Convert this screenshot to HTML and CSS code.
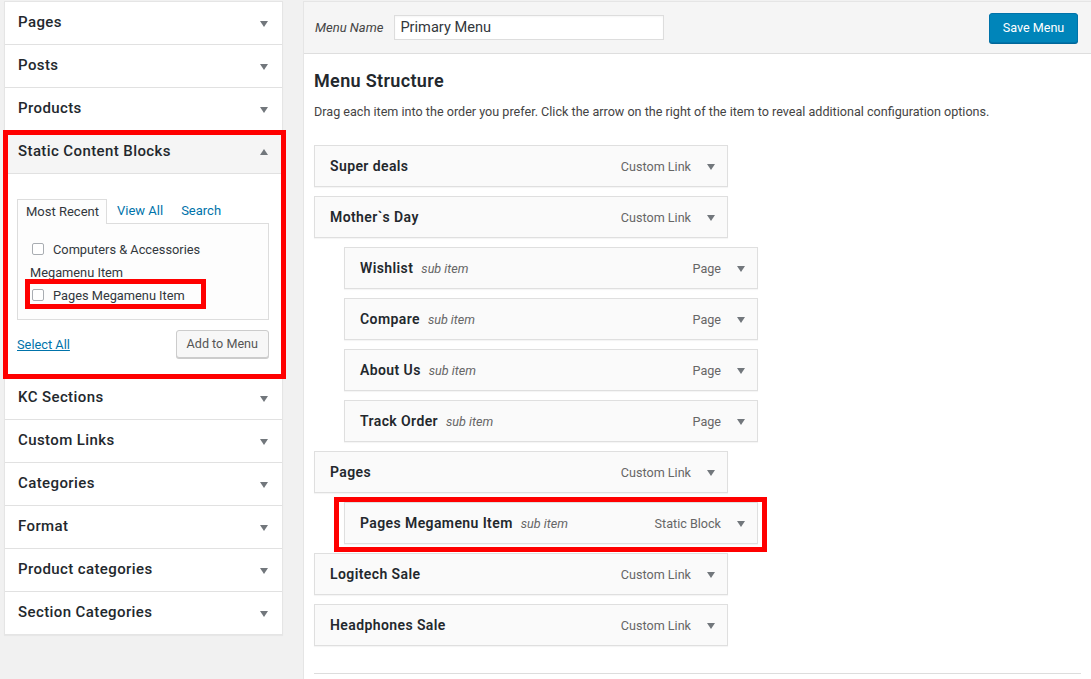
FILE: index.html
```html
<!DOCTYPE html>
<html>
<head>
<meta charset="utf-8">
<link rel="stylesheet" href="styles.css">
</head>
<body>
<div class="page">
  <aside class="side">
    <div class="acc"><span class="acc-title">Pages</span><span class="arrow"></span></div>
    <div class="acc"><span class="acc-title">Posts</span><span class="arrow"></span></div>
    <div class="acc"><span class="acc-title">Products</span><span class="arrow"></span></div>
    <div class="acc-open marked">
      <div class="acc acc-head"><span class="acc-title">Static Content Blocks</span><span class="arrow up"></span></div>
      <div class="acc-body">
        <div class="tabs">
          <span class="tab active">Most Recent</span>
          <span class="tab link">View All</span>
          <span class="tab link">Search</span>
        </div>
        <div class="tab-panel">
          <label class="chk-line"><span class="chk"></span>Computers &amp; Accessories<br>Megamenu Item</label>
          <label class="chk-line small-mark"><span class="chk"></span>Pages Megamenu Item</label>
        </div>
        <div class="acc-actions">
          <a class="select-all">Select All</a>
          <span class="btn">Add to Menu</span>
        </div>
      </div>
    </div>
    <div class="acc"><span class="acc-title">KC Sections</span><span class="arrow"></span></div>
    <div class="acc"><span class="acc-title">Custom Links</span><span class="arrow"></span></div>
    <div class="acc"><span class="acc-title">Categories</span><span class="arrow"></span></div>
    <div class="acc"><span class="acc-title">Format</span><span class="arrow"></span></div>
    <div class="acc"><span class="acc-title">Product categories</span><span class="arrow"></span></div>
    <div class="acc"><span class="acc-title">Section Categories</span><span class="arrow"></span></div>
  </aside>

  <main class="menu">
    <div class="menu-header">
      <span class="name-label">Menu Name</span>
      <span class="name-input">Primary Menu</span>
      <span class="save">Save Menu</span>
    </div>
    <div class="menu-body">
      <h3 class="menu-h">Menu Structure</h3>
      <p class="menu-desc">Drag each item into the order you prefer. Click the arrow on the right of the item to reveal additional configuration options.</p>
      <div class="items">
        <div class="item"><span class="it-title">Super deals</span><span class="it-type">Custom Link</span><span class="arrow"></span></div>
        <div class="item"><span class="it-title">Mother`s Day</span><span class="it-type">Custom Link</span><span class="arrow"></span></div>
        <div class="item sub"><span class="it-title">Wishlist</span><span class="it-sub">sub item</span><span class="it-type">Page</span><span class="arrow"></span></div>
        <div class="item sub"><span class="it-title">Compare</span><span class="it-sub">sub item</span><span class="it-type">Page</span><span class="arrow"></span></div>
        <div class="item sub"><span class="it-title">About Us</span><span class="it-sub">sub item</span><span class="it-type">Page</span><span class="arrow"></span></div>
        <div class="item sub"><span class="it-title">Track Order</span><span class="it-sub">sub item</span><span class="it-type">Page</span><span class="arrow"></span></div>
        <div class="item"><span class="it-title">Pages</span><span class="it-type">Custom Link</span><span class="arrow"></span></div>
        <div class="item sub item-mark"><span class="it-title">Pages Megamenu Item</span><span class="it-sub">sub item</span><span class="it-type">Static Block</span><span class="arrow"></span></div>
        <div class="item"><span class="it-title">Logitech Sale</span><span class="it-type">Custom Link</span><span class="arrow"></span></div>
        <div class="item"><span class="it-title">Headphones Sale</span><span class="it-type">Custom Link</span><span class="arrow"></span></div>
      </div>
      <div class="menu-footer"></div>
    </div>
  </main>
</div>
</body>
</html>
```

FILE: styles.css
```css
*, *::before, *::after { box-sizing: border-box; }
html, body { margin: 0; padding: 0; }
body {
  background: #f1f1f1;
  font-family: Roboto, "Liberation Sans", Arial, sans-serif;
  color: #32373c;
  width: 1091px;
  height: 679px;
  overflow: hidden;
}
.page {
  display: flex;
  align-items: flex-start;
  padding-top: 1px;
  gap: 20px;
}
.side {
  width: 279px;
  margin-left: 4px;
  background: #fff;
  border: 1px solid #e5e5e5;
  box-shadow: 0 1px 1px rgba(0,0,0,.04);
  flex: none;
}
.acc {
  height: 43px;
  border-bottom: 1px solid #e1e1e1;
  display: flex;
  align-items: center;
  padding: 0 14px 0 13px;
  background: #fff;
}
.side > .acc:last-child { border-bottom: none; height: 42px; }
.acc-title {
  flex: 1;
  font-size: 15px;
  font-weight: 500;
  color: #23282d;
  letter-spacing: 0.4px;
  margin-top: -3px;
}
.arrow {
  width: 0;
  height: 0;
  border-left: 4.5px solid transparent;
  border-right: 4.5px solid transparent;
  border-top: 6px solid #72777c;
  margin-top: 2px;
}
.arrow.up {
  border-top: none;
  border-bottom: 6px solid #72777c;
  margin-top: 0;
}
.acc-open { position: relative; }
.acc-head { background: #f5f5f5; }
.marked::after {
  content: "";
  position: absolute;
  left: -2px;
  right: -4px;
  top: -1px;
  bottom: -2px;
  border: 5px solid #ff0000;
  pointer-events: none;
}
.acc-body {
  height: 203px;
  border-bottom: 1px solid #e1e1e1;
  padding: 25px 13px 0 12px;
}
.tabs {
  display: flex;
  align-items: flex-end;
  height: 24px;
  font-size: 13px;
}
.tab {
  height: 24px;
  line-height: 23px;
}
.tab.active {
  border: 1px solid #ddd;
  border-bottom: none;
  background: #fdfdfd;
  color: #32373c;
  position: relative;
  top: 1px;
  height: 25px;
  padding: 0 7px 0 8px;
}
.tab.link { color: #0073aa; padding: 0 0 0 10px; }
.tab.link + .tab.link { padding-left: 18px; }
.tab-panel {
  height: 97px;
  border: 1px solid #ddd;
  background: #fdfdfd;
  padding: 14px 12px 0 12px;
  font-size: 12.8px;
  line-height: 23px;
  color: #32373c;
}
.chk-line { display: block; position: relative; }
.chk {
  display: inline-block;
  width: 12px;
  height: 12px;
  border: 1px solid #a9adb2;
  border-radius: 2px;
  background: #fff;
  margin: 0 9px 0 2px;
  vertical-align: -1px;
}
.small-mark::after {
  content: "";
  position: absolute;
  left: -5px;
  top: -5px;
  width: 181px;
  height: 30px;
  border: 5px solid #ff0000;
}
.acc-actions {
  display: flex;
  justify-content: space-between;
  align-items: center;
  margin-top: 10px;
}
.select-all {
  color: #0073aa;
  text-decoration: underline;
  font-size: 12.8px;
}
.btn {
  display: inline-block;
  height: 28px;
  line-height: 26px;
  padding: 0 10px;
  font-size: 12.6px;
  color: #555;
  background: #f7f7f7;
  border: 1px solid #ccc;
  border-radius: 3px;
  box-shadow: 0 1px 0 #ccc;
}
.menu {
  flex: 1;
  background: #fff;
  border: 1px solid #e5e5e5;
  border-right: none;
  min-height: 700px;
}
.menu-header {
  height: 52px;
  background: #f5f5f5;
  border-bottom: 1px solid #dedede;
  display: flex;
  align-items: center;
  padding: 0 13px 0 11px;
}
.name-label {
  font-style: italic;
  font-size: 13px;
  color: #444;
  margin-right: 11px;
}
.name-input {
  width: 270px;
  height: 25px;
  border: 1px solid #ddd;
  background: #fff;
  font-size: 14.6px;
  line-height: 23px;
  padding: 0 5px;
  color: #32373c;
  box-shadow: inset 0 1px 2px rgba(0,0,0,.04);
}
.save {
  margin-left: auto;
  height: 30px;
  width: 89px;
  background: #0085ba;
  border: 1px solid #0073aa;
  border-radius: 3px;
  color: #fff;
  font-size: 12.6px;
  line-height: 28px;
  text-align: center;
  box-shadow: 0 1px 0 #006799;
}
.menu-body { padding: 15px 10px 0 10px; }
.menu-h {
  margin: 0;
  font-size: 18px;
  line-height: 24px;
  font-weight: 600;
  color: #23282d;
  letter-spacing: 0.35px;
}
.menu-desc {
  margin: 9px 0 0 0;
  font-size: 12.6px;
  line-height: 20px;
  color: #444;
}
.items { margin-top: 23px; }
.item {
  width: 414px;
  height: 42px;
  margin-bottom: 9px;
  border: 1px solid #dfdfdf;
  background: #fafafa;
  display: flex;
  align-items: center;
  padding: 0 12px 0 15px;
  position: relative;
  box-shadow: 0 1px 1px rgba(0,0,0,.04);
}
.item.sub { margin-left: 30px; }
.it-title {
  font-size: 14px;
  font-weight: 600;
  color: #23282d;
  letter-spacing: 0.4px;
}
.it-sub {
  font-size: 12.6px;
  font-style: italic;
  color: #666;
  margin-left: 8px;
}
.it-type {
  margin-left: auto;
  margin-right: 16px;
  font-size: 12.6px;
  color: #666;
}
.item-mark::after {
  content: "";
  position: absolute;
  left: -11px;
  right: -10px;
  top: -6px;
  bottom: -9px;
  border: 5px solid #ff0000;
  pointer-events: none;
}
.menu-footer {
  margin-top: 27px;
  border-top: 1px solid #ddd;
  height: 20px;
}
```
